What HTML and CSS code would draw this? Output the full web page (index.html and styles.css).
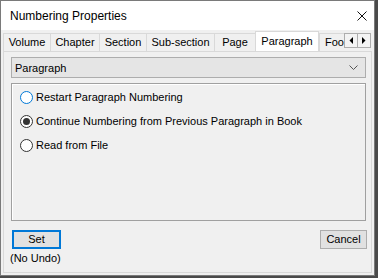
FILE: index.html
```html
<!DOCTYPE html>
<html>
<head>
<meta charset="utf-8">
<link rel="stylesheet" href="styles.css">
</head>
<body>
<div class="window">
  <div class="titlebar">
    <span class="title">Numbering Properties</span>
    <svg class="close" width="10" height="10" viewBox="0 0 10 10"><path d="M0.5 0.5L9.5 9.5M9.5 0.5L0.5 9.5" stroke="#111" stroke-width="1"/></svg>
  </div>
  <div class="client">
    <div class="tabs">
      <div class="tab t-volume">Volume</div>
      <div class="tab t-chapter">Chapter</div>
      <div class="tab t-section">Section</div>
      <div class="tab t-sub">Sub-section</div>
      <div class="tab t-page">Page</div>
      <div class="tab t-para selected">Paragraph</div>
      <div class="tab t-foot">Foo</div>
      <div class="tab-scroll">
        <div class="arrow"><svg width="4" height="7" viewBox="0 0 4 7"><path d="M4 0V7L0.5 3.5Z" fill="#000"/></svg></div>
        <div class="arrow"><svg width="4" height="7" viewBox="0 0 4 7"><path d="M0 0V7L3.5 3.5Z" fill="#000"/></svg></div>
      </div>
    </div>
    <div class="panel">
      <div class="select">
        <span>Paragraph</span>
        <svg class="chev" width="9" height="5" viewBox="0 0 9 5"><path d="M0.5 0.5L4.5 4.5L8.5 0.5" fill="none" stroke="#555" stroke-width="1"/></svg>
      </div>
      <div class="group">
        <label class="radio-row"><span class="radio hover"></span><span>Restart Paragraph Numbering</span></label>
        <label class="radio-row"><span class="radio checked"></span><span>Continue Numbering from Previous Paragraph in Book</span></label>
        <label class="radio-row"><span class="radio"></span><span>Read from File</span></label>
      </div>
      <div class="actions">
        <div class="set-col">
          <div class="btn default">Set</div>
          <div class="note">(No Undo)</div>
        </div>
        <div class="btn cancel">Cancel</div>
      </div>
    </div>
  </div>
</div>
</body>
</html>
```
FILE: styles.css
```css
html, body {
  margin: 0;
  padding: 0;
}
body {
  background: #4a4a4a;
  width: 378px;
  height: 278px;
  overflow: hidden;
  font-family: "Liberation Sans", Arial, sans-serif;
  font-size: 11px;
  color: #000;
}
.window {
  box-sizing: border-box;
  width: 375px;
  height: 276px;
  border: 1px solid #7a7a7a;
  background: #f0f0f0;
  display: flex;
  flex-direction: column;
}
.titlebar {
  height: 29px;
  background: #fff;
  display: flex;
  align-items: center;
  justify-content: space-between;
  padding: 0 7px 0 9px;
  flex: none;
}
.title {
  font-size: 12px;
  margin-top: 1px;
}
.close {
  display: block;
  margin-top: 1px;
}
.client {
  flex: 1;
  display: flex;
  flex-direction: column;
  padding: 0 2px 2px 2px;
}
.tabs {
  position: relative;
  height: 21px;
  display: flex;
  align-items: flex-end;
  flex: none;
  overflow: hidden;
}
.tab {
  box-sizing: border-box;
  height: 18px;
  border: 1px solid #d9d9d9;
  border-right: none;
  border-bottom: none;
  background: #f0f0f0;
  text-align: center;
  line-height: 17px;
  white-space: nowrap;
  flex: none;
}
.t-volume { width: 47px; }
.t-chapter { width: 49px; }
.t-section { width: 47px; }
.t-sub { width: 68px; }
.t-page { width: 41px; }
.t-para { width: 64px; }
.t-foot { width: 40px; text-align: left; padding-left: 5px; }
.tab.selected {
  position: relative;
  z-index: 2;
  height: 21px;
  margin-bottom: -1px;
  background: #fff;
  border-right: 1px solid #d9d9d9;
  line-height: 18px;
  padding-bottom: 3px;
}
.tab-scroll {
  position: absolute;
  left: 341px;
  top: 3px;
  display: flex;
  z-index: 3;
}
.arrow {
  box-sizing: border-box;
  width: 14px;
  height: 15px;
  border: 1px solid #adadad;
  background: #f3f3f3;
  display: flex;
  align-items: center;
  justify-content: center;
}
.arrow + .arrow {
  margin-left: -1px;
}
.arrow svg { display: block; }
.panel {
  flex: 1;
  border: 1px solid #d9d9d9;
  padding: 5px 5px 0 7px;
  display: flex;
  flex-direction: column;
}
.select {
  box-sizing: border-box;
  height: 21px;
  border: 1px solid #adadad;
  background: #e5e5e5;
  display: flex;
  align-items: center;
  justify-content: space-between;
  padding: 0 4px 0 3px;
}
.chev { display: block; margin-right: 3px; }
.group {
  margin-top: 5px;
  box-sizing: border-box;
  height: 138px;
  border: 1px solid #a0a0a0;
  box-shadow: inset 1px 1px 0 #fff;
  padding: 1px 0 0 8px;
}
.radio-row {
  height: 24px;
  display: flex;
  align-items: center;
  gap: 3px;
}
.radio {
  box-sizing: border-box;
  width: 13px;
  height: 13px;
  border: 1px solid #333;
  border-radius: 50%;
  background: #fff;
  display: flex;
  align-items: center;
  justify-content: center;
  flex: none;
}
.radio.hover {
  border-color: #0078d7;
}
.radio.checked::after {
  content: "";
  width: 7px;
  height: 7px;
  border-radius: 50%;
  background: #333;
}
.actions {
  margin-top: 9px;
  display: flex;
  justify-content: space-between;
  align-items: flex-start;
}
.set-col {
  display: flex;
  flex-direction: column;
}
.btn {
  box-sizing: border-box;
  height: 19px;
  background: #e1e1e1;
  border: 1px solid #adadad;
  text-align: center;
  line-height: 17px;
}
.btn.default {
  width: 49px;
  margin-left: 1px;
  border: 2px solid #0078d7;
  line-height: 15px;
}
.btn.cancel {
  width: 47px;
  margin-right: -1px;
}
.note {
  margin-top: 3px;
  margin-left: -1px;
}
```
